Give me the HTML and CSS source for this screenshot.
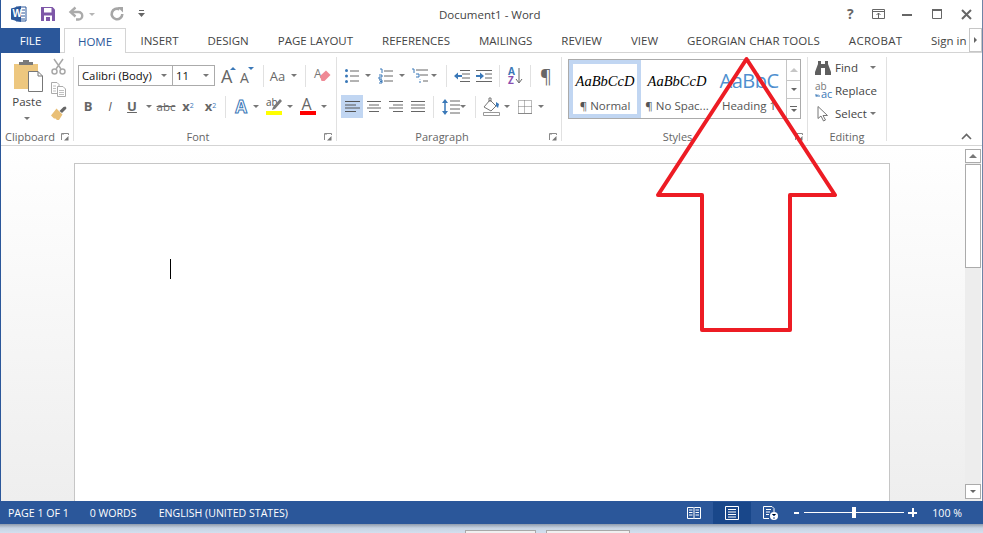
FILE: index.html
```html
<!DOCTYPE html>
<html lang="en">
<head>
<meta charset="utf-8">
<title>Document1 - Word</title>
<link rel="stylesheet" href="styles.css">
</head>
<body>
<svg class="sprites" width="0" height="0" aria-hidden="true">
  <symbol id="launcher" viewBox="0 0 8 8"><path d="M.5 7V.5H7.500M2 .5V2M7.500 .5V2" fill="none" stroke="#8a8a8a"/><path d="M7.500 7.500H3L7.500 3Z" fill="#777"/></symbol>
</svg>
<div class="app">
  <div class="window">
    <header class="titlebar">
      <div class="qat">
        <svg class="i-word" width="16" height="16" viewBox="0 0 16 16"><path d="M5 1H15V15H5Z" fill="#fff" stroke="#2b579a"/><path d="M9 4H14M9 7H14M9 10H14M9 13H14" stroke="#2b579a"/><path d="M0 2.500L10 0V16L0 13.500Z" fill="#2b579a"/><text x="1.500" y="11" class="svg-w">W</text></svg>
        <svg class="i-save" width="14" height="14" viewBox="0 0 14 14"><path d="M0 0H11.500L14 2.500V14H0Z" fill="#7e57a8"/><path d="M3 1H10.500V5.500H3Z" fill="#fff"/><path d="M3 8.500H11V14H3Z" fill="#fff"/><path d="M5 10H9V14H5Z" fill="#7e57a8"/></svg>
        <svg class="i-undo" width="15" height="14" viewBox="0 0 15 14"><path d="M2 5H9.500A3.700 3.700 0 0 1 9.500 12.500H7" fill="none" stroke="#ababab" stroke-width="2.400"/><path d="M6.500 .5L1.500 5L6.500 9.500" fill="none" stroke="#ababab" stroke-width="2.400"/></svg>
        <span class="dd dd-undo"><i class="caret caret-light"></i></span>
        <svg class="i-redo" width="14" height="14" viewBox="0 0 14 14"><path d="M9.500 2.300A5.300 5.300 0 1 0 12.300 7" fill="none" stroke="#a6a6a6" stroke-width="2.600"/><path d="M7.500 0H13V5.500Z" fill="#a6a6a6"/></svg>
        <svg class="i-custom" width="7" height="8" viewBox="0 0 7 8"><path d="M1 .5H6" stroke="#666"/><path d="M0 3H7L3.500 7Z" fill="#666"/></svg>
      </div>
      <h1 class="doc-title">Document1 - Word</h1>
      <div class="winctl">
        <span class="help">?</span>
        <svg class="i-ropt" width="13" height="10" viewBox="0 0 13 10"><path d="M.5 .5H12.500V9.500H.5Z" fill="none" stroke="#666"/><path d="M.5 2.500H12.500" stroke="#666"/><path d="M6.500 4V9M4.500 6L6.500 4L8.500 6" fill="none" stroke="#666"/></svg>
        <svg class="i-min" width="10" height="10" viewBox="0 0 10 10"><path d="M0 6H10" stroke="#666" stroke-width="2"/></svg>
        <svg class="i-max" width="10" height="10" viewBox="0 0 10 10"><path d="M.5 1.500H9.500V9.500H.5Z" fill="none" stroke="#666"/><path d="M0 1H10" stroke="#666" stroke-width="2"/></svg>
        <svg class="i-close" width="11" height="11" viewBox="0 0 11 11"><path d="M1 1L10 10M10 1L1 10" stroke="#666" stroke-width="2"/></svg>
      </div>
    </header>

    <nav class="tabs">
      <span class="tab-file">FILE</span>
      <span class="tab-home">HOME</span>
      <span class="tab">INSERT</span>
      <span class="tab">DESIGN</span>
      <span class="tab">PAGE LAYOUT</span>
      <span class="tab">REFERENCES</span>
      <span class="tab">MAILINGS</span>
      <span class="tab">REVIEW</span>
      <span class="tab">VIEW</span>
      <span class="tab tab-georgian">GEORGIAN CHAR TOOLS</span>
      <span class="tab tab-acrobat">ACROBAT</span>
      <span class="tab tab-sign">Sign in</span>
      <span class="tab-more"><i class="caret-right"></i></span>
    </nav>

    <section class="ribbon">
      <div class="group g-clip">
        <div class="clip-body">
          <div class="paste">
            <svg width="32" height="32" viewBox="0 0 32 32"><path d="M1 5H25V30H1Z" fill="#edc77f"/><path d="M6 5H20V2H16V0H10V2H6Z" fill="#7a7a7a" transform="translate(0 1)"/><path d="M15.500 12.500H25L29.500 17V32.500H15.500Z" fill="#fff" stroke="#777"/><path d="M25 12.500V17H29.500" fill="none" stroke="#777"/></svg>
            <span class="paste-label">Paste</span>
            <i class="caret"></i>
          </div>
          <div class="clip-small">
            <svg width="15" height="16" viewBox="0 0 15 16"><path d="M3 0L10 10M12 0L5 10" stroke="#a8a8a8" stroke-width="1.500"/><circle cx="3.500" cy="12.500" r="2.500" fill="none" stroke="#a8a8a8" stroke-width="1.500"/><circle cx="11.500" cy="12.500" r="2.500" fill="none" stroke="#a8a8a8" stroke-width="1.500"/></svg>
            <svg width="15" height="15" viewBox="0 0 15 15"><path d="M.5 .5H6L8 2.500V11.500H.5Z" fill="#fff" stroke="#ababab"/><path d="M6.500 4.500H12L14.500 7V14.500H6.500Z" fill="#fff" stroke="#ababab"/><path d="M2 4H5M2 6.500H5M2 9H5M8 8.500H13M8 10.500H13M8 12.500H13" stroke="#c0c0c0"/></svg>
            <svg width="16" height="14" viewBox="0 0 16 14"><path d="M8.500 5L12.500 1L14.500 .5L15.500 2L15 3L11 7Z" fill="#666"/><path d="M5.500 2.500L11.500 8.500L8 14H6L4.500 12.500L3 12.500L0 9.500Z" fill="#e9bf76"/></svg>
          </div>
        </div>
        <div class="glabel pad-l">Clipboard<svg class="launch" width="8" height="8"><use href="#launcher"/></svg></div>
      </div>

      <div class="group g-font">
        <div class="row row1 font-r1">
          <span class="combo combo-font">Calibri (Body)<i class="caret"></i></span>
          <span class="combo combo-size">11<i class="caret"></i></span>
          <span class="b b-grow"><svg width="18" height="20" viewBox="0 0 18 20"><text x="1" y="17" class="svg-a">A</text><path d="M10 4H16L13 1Z" fill="#3a78b8"/></svg></span>
          <span class="b b-shrink"><svg width="18" height="20" viewBox="0 0 18 20"><text x="2" y="17" class="svg-a2">A</text><path d="M10 1H16L13 4Z" fill="#3a78b8"/></svg></span>
          <i class="sep s-264"></i>
          <span class="b b-aa">Aa</span>
          <span class="dd w9"><i class="caret"></i></span>
          <i class="sep s-306"></i>
          <span class="b b-erase"><svg width="20" height="20" viewBox="0 0 20 20"><text x="2" y="12" class="svg-era">A</text><path d="M8 10L14 4.500L18.500 9L12.500 15L9.500 15Z" fill="#ef8a96"/></svg></span>
        </div>
        <div class="row row2 font-r2">
          <span class="b w22 t-b">B</span>
          <span class="b w22 t-i">I</span>
          <span class="b w22 t-u">U</span>
          <span class="dd w12"><i class="caret"></i></span>
          <span class="b w22 t-abc">abc</span>
          <span class="b w22 t-x">x<sub>2</sub></span>
          <span class="b w23 t-x">x<sup>2</sup></span>
          <i class="sep s-227"></i>
          <span class="b b-effect">A</span>
          <span class="dd w6"><i class="caret"></i></span>
          <span class="b b-high"><svg width="16" height="20" viewBox="0 0 16 20"><text x="0" y="10" class="svg-ab">ab</text><path d="M7 11L14 3L16 5L9 13L6 14Z" fill="#7a7a7a"/><path d="M0 15H16V19H0Z" fill="#ff0"/></svg></span>
          <span class="dd w16"><i class="caret"></i></span>
          <span class="b b-color"><svg width="16" height="20" viewBox="0 0 16 20"><text x="1.500" y="14" class="svg-a3">A</text><path d="M0 15H16V19H0Z" fill="#f00"/></svg></span>
          <span class="dd w16"><i class="caret"></i></span>
        </div>
        <div class="glabel pad-r">Font<svg class="launch" width="8" height="8"><use href="#launcher"/></svg></div>
      </div>

      <div class="group g-para">
        <div class="row row1 para-r1">
          <span class="b b-bul"><svg width="14" height="14" viewBox="0 0 14 14"><path d="M5 2H14M5 7H14M5 12H14" stroke="#666"/><circle cx="1.500" cy="1.500" r="1.500" fill="#3a78b8"/><circle cx="1.500" cy="7" r="1.500" fill="#3a78b8"/><circle cx="1.500" cy="12.500" r="1.500" fill="#3a78b8"/></svg></span>
          <span class="dd w18"><i class="caret"></i></span>
          <span class="b b-num"><svg width="14" height="14" viewBox="0 0 14 14"><path d="M5 2H14M5 7H14M5 12H14" stroke="#666"/><path d="M1 0H3V4M0 6H3V8H0V10H3M0 11H3V14H0M1 12.500H3" fill="none" stroke="#3a78b8"/></svg></span>
          <span class="dd w18"><i class="caret"></i></span>
          <span class="b b-multi"><svg width="16" height="14" viewBox="0 0 16 14"><path d="M4 1H16M8 6H16M11 12H16" stroke="#666"/><path d="M0 0H2V4M4 5H7V8H4M8 10V10.500M8 12V14" fill="none" stroke="#3a78b8"/></svg></span>
          <span class="dd w12"><i class="caret"></i></span>
          <i class="sep s-447"></i>
          <span class="b b-out"><svg width="16" height="12" viewBox="0 0 16 12"><path d="M6 .5H16M8 4H16M8 8H16M6 11.500H16" stroke="#666"/><path d="M0 6L4 2.500V5H8V7H4V9.500Z" fill="#3a78b8"/></svg></span>
          <span class="b b-in"><svg width="16" height="12" viewBox="0 0 16 12"><path d="M0 .5H16M9 4H16M9 8H16M0 11.500H16" stroke="#666"/><path d="M8 6L4 2.500V5H0V7H4V9.500Z" fill="#3a78b8"/></svg></span>
          <i class="sep s-500"></i>
          <span class="b b-sort"><svg width="15" height="18" viewBox="0 0 15 18"><text x="0" y="8" class="svg-az svg-az-a">A</text><text x="0" y="17" class="svg-az svg-az-z">Z</text><path d="M11 1V15M8 12L11 16L14 12" fill="none" stroke="#666"/></svg></span>
          <i class="sep s-531"></i>
          <span class="b b-pil">¶</span>
        </div>
        <div class="row row2 para-r2">
          <span class="b w22 active"><svg width="15" height="11" viewBox="0 0 15 11"><path d="M0 .5H15M0 4H11M0 7H15M0 10.500H11" stroke="#555"/></svg></span>
          <span class="b w22"><svg width="14" height="11" viewBox="0 0 14 11"><path d="M0 .5H14M2 4H12M0 7H14M2 10.500H12" stroke="#666"/></svg></span>
          <span class="b w22"><svg width="14" height="11" viewBox="0 0 14 11"><path d="M0 .5H14M4 4H14M0 7H14M4 10.500H14" stroke="#666"/></svg></span>
          <span class="b w22"><svg width="14" height="11" viewBox="0 0 14 11"><path d="M0 .5H14M0 4H14M0 7H14M0 10.500H14" stroke="#666"/></svg></span>
          <i class="sep s-434"></i>
          <span class="b b-ls"><svg width="18" height="16" viewBox="0 0 18 16"><path d="M8 2H18M8 6H18M8 10H18M8 14H18" stroke="#666"/><path d="M3 2V14" stroke="#3a78b8" stroke-width="1.500"/><path d="M0 4L3 0L6 4ZM0 12L3 16L6 12Z" fill="#3a78b8"/></svg></span>
          <span class="dd w6"><i class="caret"></i></span>
          <i class="sep s-476"></i>
          <span class="b b-shade"><svg width="17" height="18" viewBox="0 0 17 18"><path d="M1 9L7 2L13 8L8 13Z" fill="#fff" stroke="#777"/><path d="M6 4V0H8V4" fill="none" stroke="#777"/><path d="M13 4L16 6L15 10L13 8Z" fill="#3a78b8"/><path d="M.5 14.500H16.500V17.500H.5Z" fill="#fff" stroke="#999"/></svg></span>
          <span class="dd w14"><i class="caret"></i></span>
          <span class="b b-bord"><svg width="14" height="14" viewBox="0 0 14 14"><path d="M.5 .5H13.500V13.500H.5ZM6.500 .5V13.500M.5 6.500H13.500" fill="none" stroke="#777" stroke-dasharray="1 1"/><path d="M0 13.500H14" stroke="#888"/></svg></span>
          <span class="dd w18"><i class="caret"></i></span>
        </div>
        <div class="glabel pad-r">Paragraph<svg class="launch" width="8" height="8"><use href="#launcher"/></svg></div>
      </div>

      <div class="group g-styles">
        <div class="gallery">
          <div class="style selected"><span class="sample">AaBbCcD</span><span class="sname">¶ Normal</span></div>
          <div class="style"><span class="sample">AaBbCcD</span><span class="sname">¶ No Spac...</span></div>
          <div class="style"><span class="sample sample-h">AaBbC</span><span class="sname">Heading 1</span></div>
          <div class="gal-scroll">
            <span class="gs gs-up"><i class="tri-up"></i></span>
            <span class="gs"><i class="caret caret-dark"></i></span>
            <span class="gs gs-more"><i class="more-bar"></i><i class="caret caret-dark"></i></span>
          </div>
        </div>
        <div class="glabel pad-r">Styles<svg class="launch" width="8" height="8"><use href="#launcher"/></svg></div>
      </div>

      <div class="group g-edit">
        <div class="edit-row">
          <svg width="16" height="14" viewBox="0 0 16 14"><path d="M3 0H6V3H10V0H13V3L16 11V14H10V7H6V14H0V11L3 3Z" fill="#5f5f5f"/></svg>
          <span>Find</span><i class="caret find-caret"></i>
        </div>
        <div class="edit-row">
          <svg width="16" height="16" viewBox="0 0 16 16"><text x="0" y="7" class="svg-ab2">ab</text><text x="6" y="15" class="svg-ac">ac</text><path d="M1 11V13H5M3 11.500L1 13.500" fill="none" stroke="#3a78b8"/></svg>
          <span>Replace</span>
        </div>
        <div class="edit-row">
          <svg class="sel-ico" width="12" height="16" viewBox="0 0 12 16"><path d="M1 .5V12.500L4 10L6.500 15L8.500 14L6 9.500H10.500Z" fill="#fff" stroke="#777"/></svg>
          <span>Select</span><i class="caret sel-caret"></i>
        </div>
        <div class="glabel">Editing</div>
      </div>

      <svg class="collapse" width="11" height="7" viewBox="0 0 11 7"><path d="M1 6L5.500 1.500L10 6" fill="none" stroke="#666" stroke-width="1.600"/></svg>
    </section>

    <main class="doc">
      <div class="canvas">
        <div class="page"><i class="text-caret"></i></div>
      </div>
      <div class="vscroll">
        <span class="sb-btn"><i class="tri-up"></i></span>
        <span class="sb-thumb"></span>
        <span class="sb-btn sb-down"><i class="caret caret-dark"></i></span>
      </div>
    </main>
  </div>

  <footer class="status">
    <span class="st st-page">PAGE 1 OF 1</span>
    <span class="st st-words">0 WORDS</span>
    <span class="st st-lang">ENGLISH (UNITED STATES)</span>
    <span class="st-views">
      <svg width="14" height="14" viewBox="0 0 14 14"><path d="M.5 1.500H6.500L7 2L7.500 1.500H13.500V12.500H7.500L7 13L6.500 12.500H.5ZM7 2V13M2 4H5.500M2 6.500H5.500M2 9H5.500M8.500 4H12M8.500 6.500H12M8.500 9H12" fill="none" stroke="#fff"/></svg>
      <span class="view-active"><svg width="14" height="14" viewBox="0 0 14 14"><path d="M.5 .5H13.500V13.500H.5ZM3 3.500H11M3 6H11M3 8.500H11M3 11H11" fill="none" stroke="#fff"/></svg></span>
      <svg width="15" height="14" viewBox="0 0 15 14"><path d="M.5 .5H9L11 2.500V6M6 12.500H.5V.5M3 3.500H8M3 6H7M3 8.500H6" fill="none" stroke="#fff"/><circle cx="11" cy="10" r="4" fill="#fff"/><path d="M9 8L11 10L13 8M10 12L12 12" stroke="#2b579a"/></svg>
    </span>
    <span class="zoom">
      <i class="z-minus"></i>
      <span class="z-track"><i class="z-thumb"></i></span>
      <i class="z-plus"></i>
    </span>
    <span class="st st-pct">100 %</span>
  </footer>

  <div class="below">
    <span class="dlg-btn dlg-a"></span>
    <span class="dlg-btn dlg-b"></span>
  </div>

  <svg class="arrow" width="983" height="533" viewBox="0 0 983 533"><polygon points="746.500,59 835,195 790,195 790,330 702,330 702,195 658,195" fill="none" stroke="#ed1c24" stroke-width="4" stroke-linejoin="round"/></svg>
</div>
</body>
</html>
```

FILE: styles.css
```css
* { box-sizing: border-box; }
html, body { margin: 0; padding: 0; }
body { width: 983px; height: 533px; overflow: hidden; background: #fff; font-family: "Open Sans", "Noto Sans", sans-serif; color: #444; }
i { display: block; font-style: normal; }
svg { display: block; flex: none; overflow: visible; }
.sprites { position: absolute; }

.app { position: relative; width: 983px; height: 533px; display: flex; flex-direction: column; }
.window { flex: 1; min-height: 0; display: flex; flex-direction: column; border-left: 1px solid #2b579a; border-right: 1px solid #6f84a6; }

/* title bar */
.titlebar { height: 28px; flex: none; display: flex; align-items: center; position: relative; }
.qat { display: flex; align-items: center; padding-left: 10px; }
.i-save { margin-left: 14px; }
.i-undo { margin-left: 14px; }
.dd-undo { width: 10px; margin-left: 3px; }
.i-redo { margin-left: 13px; }
.i-custom { margin-left: 14px; }
.doc-title { position: absolute; left: 438px; top: 7px; margin: 0; font-size: 11.500px; line-height: 16px; font-weight: 400; color: #444; white-space: nowrap; }
.winctl { margin-left: auto; display: flex; align-items: center; }
.help { font-size: 14px; font-weight: 700; color: #666; width: 10px; line-height: 16px; }
.i-ropt { margin-left: 15px; }
.i-min { margin-left: 17px; }
.i-max { margin-left: 20px; }
.i-close { margin-left: 19px; margin-right: 10px; }
.svg-w { font: 700 10px "Liberation Sans", sans-serif; fill: #fff; }

/* tabs */
.tabs { height: 25px; flex: none; display: flex; align-items: stretch; border-bottom: 1px solid #d4d4d4; font-size: 11.500px; position: relative; }
.tab-file { width: 59px; height: 25px; background: #2b579a; color: #fff; display: flex; align-items: center; justify-content: center; }
.tab-home { width: 62px; height: 25px; margin-left: 4px; border: 1px solid #d4d4d4; border-bottom: 0; background: #fff; color: #2b579a; display: flex; align-items: center; justify-content: center; }
.tab { display: flex; align-items: center; padding: 0 14.500px; color: #444; white-space: nowrap; }
.tab-georgian { letter-spacing: .1px; }
.tab-acrobat { letter-spacing: .3px; }
.tab-sign { padding-left: 14px; padding-right: 0; }
.tab-more { width: 13px; height: 24px; border: 1px solid #c6c6c6; display: flex; align-items: center; justify-content: center; margin-left: auto; }
.caret-right { width: 0; height: 0; border-left: 3px solid #666; border-top: 3px solid transparent; border-bottom: 3px solid transparent; }

/* ribbon */
.ribbon { height: 93px; flex: none; display: flex; padding-top: 4px; border-bottom: 1px solid #d4d4d4; position: relative; }
.group { height: 84px; display: flex; flex-direction: column; border-right: 1px solid #e1e1e1; flex: none; }
.g-clip { width: 73px; }
.g-font { width: 263px; }
.g-para { width: 225px; }
.g-styles { width: 246px; }
.g-edit { width: 79px; }
.glabel { margin-top: auto; margin-bottom: -4px; height: 16px; line-height: 16px; font-size: 11px; color: #666; text-align: center; position: relative; }
.pad-r { padding-right: 14px; }
.pad-l { padding-right: 14px; }
.launch { position: absolute; right: 4px; top: 4px; }
.row { display: flex; align-items: center; }
.row1 { height: 21px; margin-top: 8px; }
.row2 { height: 23px; margin-top: 9px; }
.b { display: flex; align-items: center; justify-content: center; flex: none; height: 100%; color: #666; }
.dd { display: flex; align-items: center; justify-content: center; flex: none; }
.w6 { width: 6px; } .w9 { width: 9px; } .w12 { width: 12px; } .w14 { width: 14px; } .w16 { width: 16px; } .w18 { width: 18px; }
.w22 { width: 22px; } .w23 { width: 23px; }
.caret { width: 0; height: 0; border-top: 3px solid #777; border-left: 3px solid transparent; border-right: 3px solid transparent; flex: none; }
.caret-light { border-top-color: #b5b5b5; }
.caret-dark { border-top-color: #666; }
.sep { width: 1px; height: 22px; background: #e1e1e1; flex: none; }
.active { background: #c1d6f2; }

/* clipboard */
.clip-body { display: flex; }
.paste { width: 44px; margin-left: 4px; display: flex; flex-direction: column; align-items: center; }
.paste svg { margin-top: 2px; margin-left: 3px; }
.paste-label { font-size: 11.500px; line-height: 16px; margin-top: 3px; color: #444; }
.paste .caret { margin-top: 7px; }
.clip-small { display: flex; flex-direction: column; align-items: flex-start; margin-left: 2px; padding-top: 2px; }
.clip-small svg:nth-child(2) { margin-top: 7px; }
.clip-small svg:nth-child(3) { margin-top: 9px; }

/* font */
.font-r1 { padding-left: 4px; }
.font-r2 { padding-left: 3px; }
.font-r2 .b { padding-bottom: 1px; }
.combo { height: 21px; border: 1px solid #ababab; display: flex; align-items: center; justify-content: space-between; font-size: 11.300px; color: #111; padding: 0 5px 0 3px; flex: none; background: #fff; }
.combo-font { width: 95px; }
.combo-size { width: 43px; margin-left: -1px; }
.b-grow { width: 18px; margin-left: 5px; }
.b-shrink { width: 18px; }
.s-264 { margin-left: 7px; }
.b-aa { width: 23px; margin-left: 2px; font-size: 13px; color: #666; }
.s-306 { margin-left: 7px; }
.b-erase { width: 20px; margin-left: 6px; }
.svg-a { font: 400 18px "Open Sans", sans-serif; fill: #666; }
.svg-a2 { font: 400 14px "Open Sans", sans-serif; fill: #666; }
.svg-a3 { font: 400 16px "Open Sans", sans-serif; fill: #666; }
.svg-era { font: 400 12px "Open Sans", sans-serif; fill: #777; }
.svg-ab { font: 400 10px "Open Sans", sans-serif; fill: #555; }
.t-b { font: 700 13px "Open Sans", sans-serif; }
.t-i { font: italic 400 13px "Open Sans", sans-serif; }
.t-u { font: 700 13px "Open Sans", sans-serif; text-decoration: underline; }
.t-abc { font: 400 11.500px "Open Sans", sans-serif; text-decoration: line-through; }
.t-x { font: 700 13px "Open Sans", sans-serif; }
.t-x sub, .t-x sup { font-size: 7px; color: #3a78b8; font-weight: 400; line-height: 0; }
.s-227 { margin-left: 3px; }
.b-effect { width: 24px; margin-left: 3px; font: 700 17px "Open Sans", sans-serif; color: #fff; -webkit-text-stroke: 1px #3a78b8; }
.b-high { width: 16px; margin-left: 7px; }
.b-color { width: 16px; margin-left: 2px; }

/* paragraph */
.para-r1 { padding-left: 8px; }
.para-r2 { padding-left: 4px; }
.b-bul { width: 14px; }
.b-num { width: 14px; margin-left: 2px; }
.b-multi { width: 16px; margin-left: 1px; }
.s-447 { margin-left: 6px; }
.b-out { width: 16px; margin-left: 7px; }
.b-in { width: 16px; margin-left: 6px; }
.s-500 { margin-left: 7px; }
.b-sort { width: 15px; margin-left: 8px; }
.svg-az { font: 700 10px "Open Sans", sans-serif; }
.svg-az-a { fill: #3a78b8; }
.svg-az-z { fill: #8a4fb0; }
.s-531 { margin-left: 7px; }
.b-pil { width: 12px; margin-left: 9px; font-size: 18px; color: #666; }
.s-434 { margin-left: 4px; }
.b-ls { width: 18px; margin-left: 8px; }
.s-476 { margin-left: 9px; }
.b-shade { width: 17px; margin-left: 7px; }
.b-bord { width: 14px; margin-left: 4px; }

/* styles gallery */
.gallery { width: 233px; height: 60px; margin: 2px 0 0 6px; border: 1px solid #ababab; display: flex; }
.style { width: 72px; display: flex; flex-direction: column; align-items: center; flex: none; overflow: hidden; }
.style.selected { border: 4px solid #c1d6f2; }
.sample { height: 32px; font: italic 400 14.500px/43px "Liberation Serif", serif; color: #000; white-space: nowrap; }
.selected .sample { height: 28px; line-height: 35px; }
.sample-h { font: 400 20px/42px "Open Sans", sans-serif; color: #4f8fcf; letter-spacing: -.5px; }
.sname { font-size: 11.500px; line-height: 16px; color: #555; white-space: nowrap; margin-top: 6px; }
.gal-scroll { margin-left: auto; width: 14px; border-left: 1px solid #c6c6c6; display: flex; flex-direction: column; }
.gs { height: 19px; display: flex; flex-direction: column; gap: 2px; align-items: center; justify-content: center; border-bottom: 1px solid #c6c6c6; }
.gs-up { height: 21px; }
.gs-more { border-bottom: 0; }
.gs-up .tri-up { border-bottom-color: #c6c6c6; }
.tri-up { width: 0; height: 0; border-bottom: 4px solid #777; border-left: 4px solid transparent; border-right: 4px solid transparent; }
.more-bar { width: 7px; height: 1px; background: #666; }

/* editing */
.edit-row { height: 23px; display: flex; align-items: center; padding-left: 7px; font-size: 11.500px; color: #444; gap: 3px; }
.edit-row:first-child { margin-top: -1px; }
.edit-row span { margin-left: 1px; }
.edit-row svg { width: 16px; }
.edit-row .sel-ico { width: 12px; margin: 0 2px; }
.find-caret { margin-left: 9px; }
.sel-caret { margin-left: 0; }
.svg-ab2 { font: 400 10px "Open Sans", sans-serif; fill: #777; }
.svg-ac { font: 400 11px "Open Sans", sans-serif; fill: #3a78b8; }
.collapse { align-self: flex-end; margin: 0 10px 5px auto; }

/* document */
.doc { flex: 1; min-height: 0; display: flex; }
.canvas { flex: 1; min-width: 0; background: linear-gradient(#fff, #eee); padding: 17px 0 0 73px; overflow: hidden; }
.page { width: 816px; height: 340px; background: #fff; border: 1px solid #c6c6c6; border-bottom: 0; padding: 95px 0 0 95px; }
.text-caret { width: 1px; height: 20px; background: #000; }
.vscroll { width: 16px; margin-right: 1px; margin-top: 3px; background: #ededed; display: flex; flex-direction: column; }
.sb-btn { height: 14px; border: 1px solid #ababab; background: #fff; display: flex; align-items: center; justify-content: center; flex: none; }
.sb-thumb { height: 104px; margin-top: 1px; border: 1px solid #ababab; background: #fff; flex: none; }
.sb-down { margin-top: auto; height: 15px; margin-bottom: 2px; }

/* status bar */
.status { height: 23px; flex: none; background: #2b579a; color: #fff; display: flex; align-items: center; font-size: 10.600px; position: relative; }
.st { white-space: nowrap; }
.st-page { margin-left: 8px; }
.st-words { margin-left: 21px; }
.st-lang { margin-left: 22px; }
.st-views { margin-left: auto; display: flex; align-items: center; }
.view-active { width: 38px; height: 22px; margin: 0 12px; background: #19478a; display: flex; align-items: center; justify-content: center; }
.zoom { display: flex; align-items: center; margin-left: 16px; }
.z-minus { width: 5px; height: 2px; background: #fff; }
.z-track { display: block; width: 100px; height: 1px; background: #fff; margin: 0 4px 0 5px; position: relative; }
.z-thumb { position: absolute; left: 48px; top: -5px; width: 4px; height: 11px; background: #fff; }
.z-plus { width: 9px; height: 9px; background: linear-gradient(#fff, #fff) center / 9px 2px no-repeat, linear-gradient(#fff, #fff) center / 2px 9px no-repeat; }
.st-pct { margin: 0 21px 0 15px; }

/* area below the window */
.below { height: 9px; flex: none; background: linear-gradient(#8e9bad, #c6d3e3 45%, #d3e0ef); display: flex; padding-top: 6px; }
.dlg-btn { height: 10px; background: #f0f0f0; border: 1px solid #a8a8a8; flex: none; }
.dlg-a { width: 71px; margin-left: 465px; }
.dlg-b { width: 84px; margin-left: 10px; }

/* annotation over the screenshot */
.arrow { position: absolute; left: 0; top: 0; pointer-events: none; }
```
